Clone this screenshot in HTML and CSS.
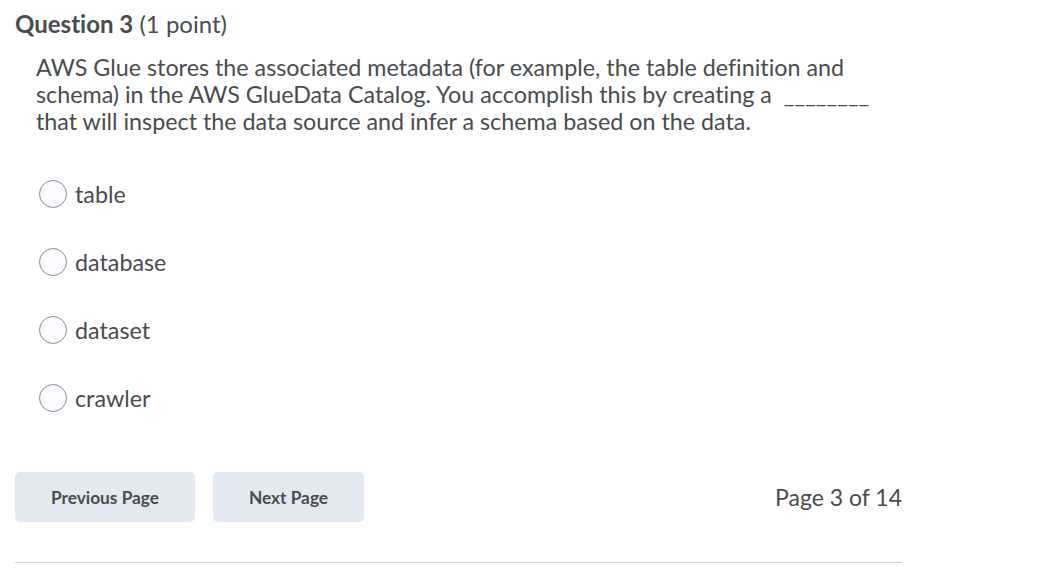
FILE: index.html
```html
<!DOCTYPE html>
<html>
<head>
<meta charset="utf-8">
<link rel="stylesheet" href="styles.css">
</head>
<body>
<div class="page">
  <h2 class="q-title"><strong>Question 3</strong> <span class="pts">(1 point)</span></h2>
  <div class="q-body">
    <p class="q-text">AWS Glue stores the associated metadata (for example, the table definition and schema) in the AWS GlueData Catalog. You accomplish this by creating a &nbsp;________ that will inspect the data source and infer a schema based on the data.</p>
    <div class="options">
      <label class="opt"><span class="radio"></span><span class="opt-label">table</span></label>
      <label class="opt"><span class="radio"></span><span class="opt-label">database</span></label>
      <label class="opt"><span class="radio"></span><span class="opt-label">dataset</span></label>
      <label class="opt"><span class="radio"></span><span class="opt-label">crawler</span></label>
    </div>
  </div>
  <div class="nav">
    <button class="btn btn-prev">Previous Page</button>
    <button class="btn btn-next">Next Page</button>
    <span class="page-count">Page 3 of 14</span>
  </div>
  <hr class="rule">
</div>
</body>
</html>
```

FILE: styles.css
```css
html, body {
  margin: 0;
  padding: 0;
  background: #ffffff;
}
body {
  font-family: Lato, "Open Sans", sans-serif;
  color: #494c4e;
  font-variant-ligatures: none;
}
.page {
  width: 887px;
  padding: 0 0 0 15px;
}
.q-title {
  margin: 0;
  padding-top: 9px;
  font-size: 24px;
  line-height: 30px;
  font-weight: 400;
}
.q-title strong {
  font-weight: 700;
}
.q-body {
  padding-left: 21px;
}
.q-text {
  margin: 15px 0 0 0;
  width: 850px;
  font-size: 23.3px;
  line-height: 27px;
}
.options {
  display: flex;
  flex-direction: column;
  gap: 40px;
  margin-top: 45px;
}
.opt {
  display: flex;
  align-items: center;
  gap: 8px;
  height: 28px;
  padding-left: 3px;
}
.radio {
  width: 26px;
  height: 26px;
  border: 1px solid #868c8f;
  border-radius: 50%;
  background: #f9fbff;
  flex: none;
}
.opt-label {
  font-size: 23.3px;
  line-height: 27px;
}
.nav {
  display: flex;
  align-items: center;
  gap: 18px;
  margin-top: 60px;
}
.btn {
  font-family: Lato, "Open Sans", sans-serif;
  font-weight: 700;
  font-size: 17.3px;
  color: #494c4e;
  background: #e3e9f1;
  border: none;
  border-radius: 5px;
  height: 50px;
  padding: 0;
}
.btn-prev { width: 180px; }
.btn-next { width: 151px; }
.page-count {
  margin-left: auto;
  font-size: 23px;
}
.rule {
  margin: 40px 0 0 0;
  border: none;
  border-top: 1px solid #cdd5dc;
  height: 0;
}
```
